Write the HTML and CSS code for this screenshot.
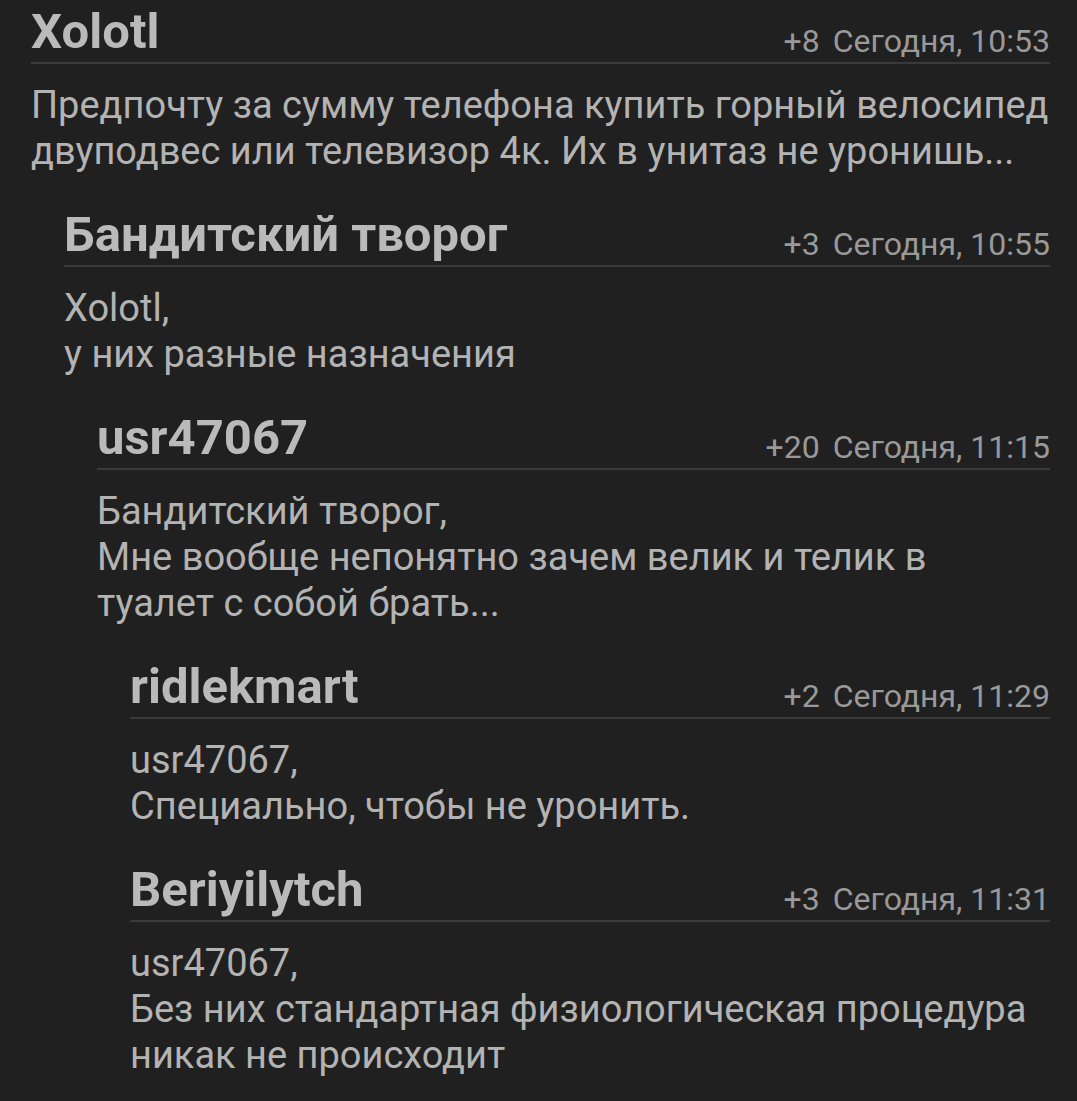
FILE: index.html
```html
<!DOCTYPE html>
<html lang="ru">
<head>
<meta charset="utf-8">
<title>Комментарии</title>
<link rel="stylesheet" href="styles.css">
</head>
<body>
<div class="thread">
  <article class="comment">
    <header class="head">
      <span class="author">Xolotl</span>
      <span class="meta"><span class="score">+8</span><span class="date">Сегодня, 10:53</span></span>
    </header>
    <p class="text">Предпочту за сумму телефона купить горный велосипед двуподвес или телевизор 4к. Их в унитаз не уронишь...</p>
    <div class="replies">
      <article class="comment">
        <header class="head">
          <span class="author">Бандитский творог</span>
          <span class="meta"><span class="score">+3</span><span class="date">Сегодня, 10:55</span></span>
        </header>
        <p class="text">Xolotl,<br>у них разные назначения</p>
        <div class="replies">
          <article class="comment">
            <header class="head">
              <span class="author">usr47067</span>
              <span class="meta"><span class="score">+20</span><span class="date">Сегодня, 11:15</span></span>
            </header>
            <p class="text">Бандитский творог,<br>Мне вообще непонятно зачем велик и телик в туалет с собой брать...</p>
            <div class="replies">
              <article class="comment">
                <header class="head">
                  <span class="author">ridlekmart</span>
                  <span class="meta"><span class="score">+2</span><span class="date">Сегодня, 11:29</span></span>
                </header>
                <p class="text">usr47067,<br>Специально, чтобы не уронить.</p>
              </article>
              <article class="comment">
                <header class="head">
                  <span class="author">Beriyilytch</span>
                  <span class="meta"><span class="score">+3</span><span class="date">Сегодня, 11:31</span></span>
                </header>
                <p class="text">usr47067,<br>Без них стандартная физиологическая процедура никак не происходит</p>
              </article>
            </div>
          </article>
        </div>
      </article>
    </div>
  </article>
</div>
</body>
</html>
```
FILE: styles.css
```css
html, body {
  margin: 0;
  padding: 0;
  background: #202020;
}

body {
  font-family: Roboto, "Noto Sans", "Liberation Sans", sans-serif;
  color: #b3b3b3;
}

.thread {
  padding: 4px 27px 0 31px;
}

.comment {
  display: flex;
  flex-direction: column;
}

.head {
  display: flex;
  justify-content: space-between;
  align-items: flex-end;
  padding-bottom: 2px;
  border-bottom: 2px solid #3a3a3a;
}

.author {
  font-size: 49px;
  font-weight: 700;
  line-height: 56px;
  color: #bababa;
}

.meta {
  display: flex;
  gap: 13px;
  font-size: 32px;
  line-height: 38px;
  color: #999999;
  white-space: nowrap;
}

.text {
  margin: 18px 0 33px;
  font-size: 38px;
  line-height: 46px;
  color: #b3b3b3;
}

.replies {
  padding-left: 33px;
}
```
